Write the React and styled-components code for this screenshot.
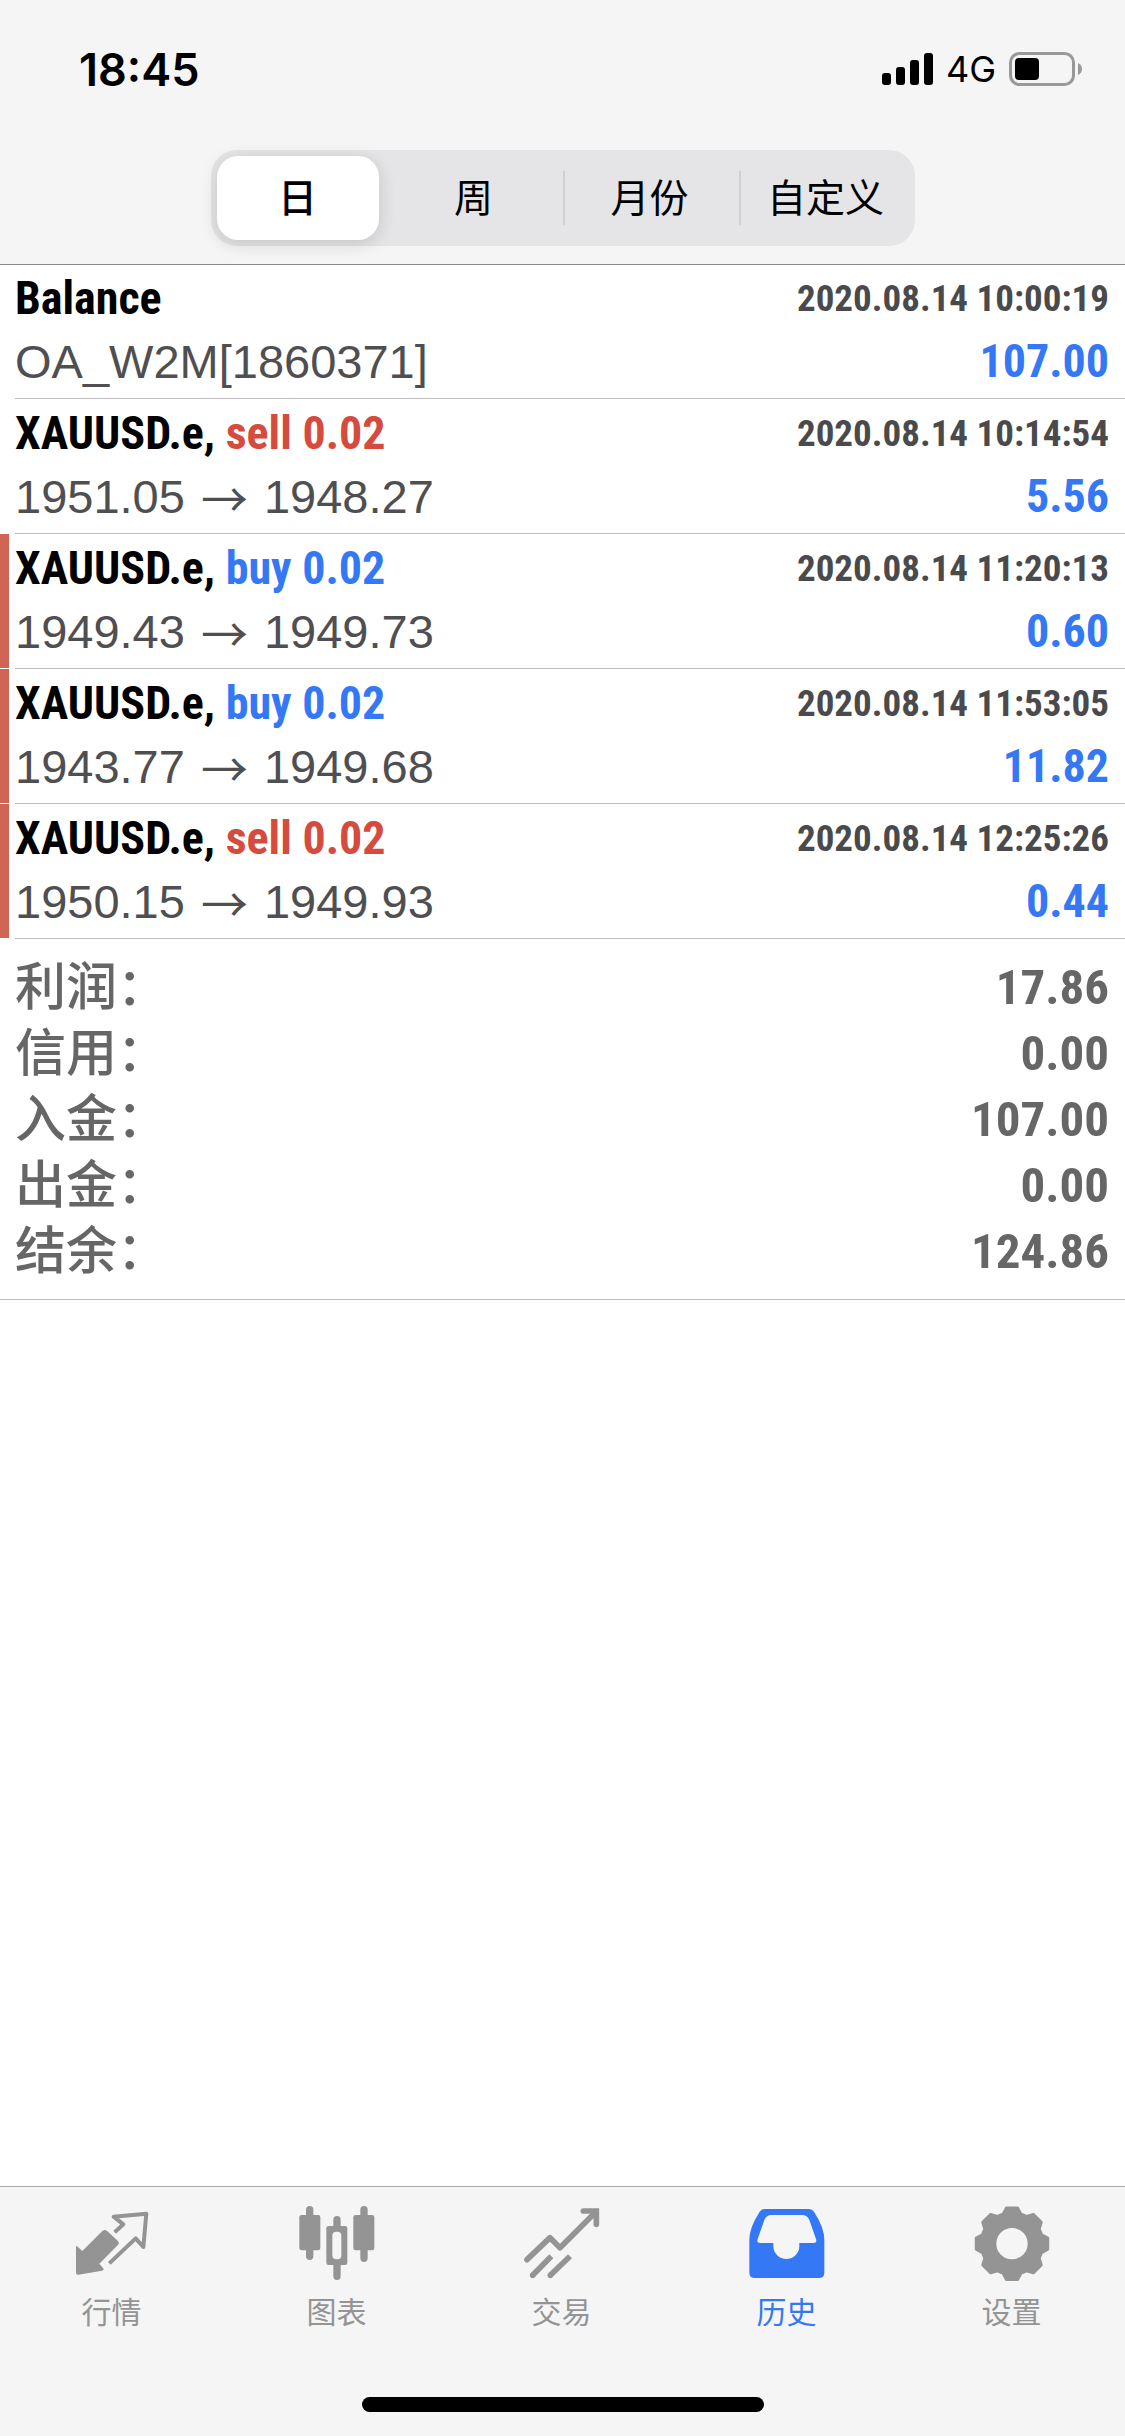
import React, { useState } from "react";
import styled, { createGlobalStyle } from "styled-components";

const GlobalStyle = createGlobalStyle`
    * {
        box-sizing: border-box;
    }

    body {
        margin: 0;
        background-color: #fff;
    }

    button {
        font: inherit;
        color: inherit;
        background: none;
        border: none;
        padding: 0;
    }
`;

const narrow = `"Roboto Condensed", "Liberation Sans", sans-serif`;
const chrome = "#f5f5f5";
const blue = "#3478f6";
const red = "#d54b3d";

const StyledPage = styled.div`
    display: flex;
    flex-direction: column;
    min-height: 100vh;
    font-family: "Liberation Sans", "Noto Sans CJK SC", sans-serif;
`;

const StyledHeader = styled.header`
    display: flex;
    flex-direction: column;
    background-color: ${chrome};
    border-bottom: 1px solid #8a8a8a;
    padding-bottom: 18px;
`;

const StyledStatusBar = styled.div`
    display: flex;
    align-items: center;
    justify-content: space-between;
    height: 138px;
    padding: 0 43px 0 79px;
    margin-bottom: 12px;
    font-family: "Inter", sans-serif;
    color: #000;
`;

const StyledTime = styled.span`
    font-size: 45px;
    font-weight: 600;
`;

const StyledIndicators = styled.div`
    display: flex;
    align-items: center;
    gap: 13px;
    font-size: 36px;
`;

const StyledSegments = styled.div`
    display: grid;
    grid-template-columns: repeat(4, 1fr);
    align-self: center;
    width: 704px;
    max-width: 100%;
    height: 96px;
    border-radius: 26px;
    background-color: #e5e5e7;
    font-size: 39px;
    line-height: 39px;
`;

const StyledSegment = styled.button`
    display: flex;
    align-items: center;
    justify-content: center;
    margin: 6px 8px 6px 6px;
    border-radius: 21px;
    font-weight: ${(props) => (props.$active ? 500 : 400)};
    background-color: ${(props) => (props.$active ? "#fff" : "transparent")};
    box-shadow: ${(props) =>
        props.$active ? "0 4px 18px rgba(0, 0, 0, 0.14)" : "none"};
`;

const StyledSegmentCell = styled.div`
    display: grid;
    background: ${(props) =>
        props.$divided
            ? "linear-gradient(#cfcfd2, #cfcfd2) left center / 2px 54px no-repeat"
            : "none"};
`;

const StyledMain = styled.main`
    flex: 1;
`;

const StyledMarker = styled.span`
    width: 9px;
    margin-bottom: 1px;
    background-color: ${(props) => (props.$on ? "#d26456" : "transparent")};
`;

const StyledDealBody = styled.div`
    flex: 1;
    padding: 3px 16px 5px 0;
    border-bottom: 1px solid #bfbfc1;
`;

const StyledDeal = styled.li`
    display: flex;
    gap: 6px;

    &:first-child ${StyledDealBody} {
        padding-top: 2px;
    }
`;

const StyledDeals = styled.ul`
    list-style: none;
    margin: 0;
    padding: 0;
`;

const StyledLine = styled.div`
    display: flex;
    align-items: center;
    justify-content: space-between;
    line-height: 63px;
`;

const StyledSymbol = styled.strong`
    font-family: ${narrow};
    font-size: 46px;
    color: #000;
`;

const StyledSide = styled.span`
    color: ${(props) => (props.$side === "sell" ? red : blue)};
`;

const StyledDate = styled.time`
    font-family: ${narrow};
    font-size: 37px;
    font-weight: 700;
    color: #4a4a4d;
`;

const StyledDetail = styled.span`
    display: flex;
    align-items: center;
    font-size: 47px;
    color: #4f4f52;
`;

const StyledArrow = styled.span`
    padding: 0 16px;
    font-family: "Noto Sans CJK SC", sans-serif;
    font-weight: 400;
`;

const StyledProfit = styled.span`
    font-family: ${narrow};
    font-size: 46px;
    font-weight: 700;
    color: ${blue};
`;

const StyledSummary = styled.dl`
    margin: 0;
    padding: 16px 16px 14px 15px;
    border-bottom: 1px solid #bfbfc1;
    color: #666;
    line-height: 66px;
`;

const StyledTotal = styled.div`
    display: flex;
    justify-content: space-between;

    dt {
        font-size: 51px;
        font-weight: 500;
    }

    dd {
        margin: 0;
        font-family: ${narrow};
        font-size: 49px;
        font-weight: 700;
    }
`;

const StyledFooter = styled.footer`
    display: flex;
    flex-direction: column;
    align-items: center;
    background-color: ${chrome};
    border-top: 1px solid #a8a8a8;
    padding: 18px 0 24px;
`;

const StyledTabs = styled.nav`
    display: grid;
    grid-template-columns: repeat(5, 1fr);
    width: 100%;
    margin-bottom: 64px;
`;

const StyledTab = styled.a`
    display: flex;
    flex-direction: column;
    align-items: center;
    gap: 12px;
    padding-right: 2px;
    font-size: 30px;
    line-height: 40px;
    text-decoration: none;
    color: ${(props) => (props.$active ? blue : "#949494")};

    svg {
        width: 76px;
        height: 76px;
    }
`;

const StyledHomeIndicator = styled.div`
    width: 402px;
    height: 15px;
    border-radius: 8px;
    background-color: #000;
`;

function SignalIcon() {
    return (
        <svg width="51" height="32" viewBox="0 0 51 32">
            <rect x="0" y="20" width="9" height="12" rx="3" />
            <rect x="14" y="14" width="9" height="18" rx="3" />
            <rect x="28" y="7" width="9" height="25" rx="3" />
            <rect x="42" y="0" width="9" height="32" rx="3" />
        </svg>
    );
}

function BatteryIcon() {
    return (
        <svg width="73" height="34" viewBox="0 0 73 34">
            <rect x="1.5" y="1.5" width="63" height="31" rx="9" fill="none" stroke="#999" strokeWidth="3" />
            <rect x="6" y="6" width="24" height="22" rx="4" />
            <path d="M69 11 Q73 13 73 17 T69 23Z" fill="#999" />
        </svg>
    );
}

function QuotesIcon() {
    return (
        <svg viewBox="0 0 228 228" fill="currentColor">
            <path d="M6 126 Q6 120 11 125 L25 138 L85 78 Q93 71 102 80 L131 107 Q138 114 131 121 L76 176 L87 189 Q92 195 84 197 L13 209 Q6 210 6 203Z" />
            <path
                d="M122 82 L148 58 L119 35 L217 26 L208 126 L185 100 L106 175"
                fill="none"
                stroke="currentColor"
                strokeWidth="12"
                strokeLinejoin="round"
            />
        </svg>
    );
}

function ChartIcon() {
    return (
        <svg viewBox="0 0 228 228" fill="currentColor">
            <rect x="1" y="30" width="63" height="106" rx="7" />
            <rect x="21" y="3" width="22" height="162" rx="11" />
            <rect x="82" y="63" width="63" height="117" rx="7" />
            <rect x="103" y="33" width="22" height="192" rx="11" />
            <rect x="100" y="80" width="27" height="83" rx="12" fill={chrome} />
            <rect x="163" y="30" width="63" height="106" rx="7" />
            <rect x="184" y="3" width="22" height="168" rx="11" />
        </svg>
    );
}

function TradeIcon() {
    return (
        <svg viewBox="0 0 228 228" fill="none" stroke="currentColor" strokeWidth="17">
            <path d="M9 164 L78 98 L108 128 L216 20" strokeLinecap="round" strokeLinejoin="round" />
            <path d="M178 18 H217 V58" strokeLinecap="round" />
            <path d="M26 211 L82 154 M79 211 L138 154" />
            <g fill="currentColor" stroke="none">
                <circle cx="26" cy="211" r="8.5" />
                <circle cx="79" cy="211" r="8.5" />
            </g>
        </svg>
    );
}

function HistoryIcon() {
    return (
        <svg viewBox="0 0 228 228" fill="currentColor" fillRule="evenodd">
            <path d="M46 12 H180 Q190 12 195 20 Q226 68 226 104 V203 Q226 219 210 219 H17 Q1 219 1 203 V104 Q1 68 32 20 Q37 12 46 12Z M68 30 Q52 30 46 45 L26 102 Q22 114 34 114 H73 V123 A39 39 0 0 0 151 123 V114 H193 Q205 114 201 102 L181 45 Q175 30 159 30Z" />
        </svg>
    );
}

// eight teeth, each one a trapezoid between the root and tip radius
const gearPoints = Array.from({ length: 8 })
    .flatMap((_, i) =>
        [
            [-17, 93],
            [-9, 109],
            [9, 109],
            [17, 93],
        ].map(([offset, radius]) => {
            const angle = ((i * 45 + offset) * Math.PI) / 180;
            const x = 114 + radius * Math.sin(angle);
            const y = 116 - radius * Math.cos(angle);
            return `${x.toFixed(1)} ${y.toFixed(1)}`;
        })
    )
    .join(" L");

function SettingsIcon() {
    return (
        <svg viewBox="0 0 228 228" fill="currentColor" fillRule="evenodd">
            <path
                d={`M${gearPoints}Z M63 116 a51 51 0 1 0 102 0 a51 51 0 1 0 -102 0Z`}
                stroke="currentColor"
                strokeWidth="8"
                strokeLinejoin="round"
            />
        </svg>
    );
}

const periods = ["日", "周", "月份", "自定义"];

const deals = [
    { symbol: "XAUUSD.e", side: "sell", volume: "0.02", open: "1951.05", close: "1948.27", date: "2020.08.14 10:14:54", profit: "5.56" },
    { symbol: "XAUUSD.e", side: "buy", volume: "0.02", open: "1949.43", close: "1949.73", date: "2020.08.14 11:20:13", profit: "0.60", marked: true },
    { symbol: "XAUUSD.e", side: "buy", volume: "0.02", open: "1943.77", close: "1949.68", date: "2020.08.14 11:53:05", profit: "11.82", marked: true },
    { symbol: "XAUUSD.e", side: "sell", volume: "0.02", open: "1950.15", close: "1949.93", date: "2020.08.14 12:25:26", profit: "0.44", marked: true },
];

const totals = [
    ["利润", "17.86"],
    ["信用", "0.00"],
    ["入金", "107.00"],
    ["出金", "0.00"],
    ["结余", "124.86"],
];

const tabs = [
    { id: "quotes", label: "行情", Icon: QuotesIcon },
    { id: "chart", label: "图表", Icon: ChartIcon },
    { id: "trade", label: "交易", Icon: TradeIcon },
    { id: "history", label: "历史", Icon: HistoryIcon },
    { id: "settings", label: "设置", Icon: SettingsIcon },
];

function Deal({ title, detail, date, profit, marked }) {
    return (
        <StyledDeal>
            <StyledMarker $on={marked} />
            <StyledDealBody>
                <StyledLine>
                    <StyledSymbol>{title}</StyledSymbol>
                    <StyledDate>{date}</StyledDate>
                </StyledLine>
                <StyledLine>
                    <StyledDetail>{detail}</StyledDetail>
                    <StyledProfit>{profit}</StyledProfit>
                </StyledLine>
            </StyledDealBody>
        </StyledDeal>
    );
}

export default function App() {
    const [period, setPeriod] = useState(0);
    const [tab, setTab] = useState("history");

    return (
        <StyledPage>
            <GlobalStyle />
            <StyledHeader>
                <StyledStatusBar>
                    <StyledTime>18:45</StyledTime>
                    <StyledIndicators>
                        <SignalIcon />
                        <span>4G</span>
                        <BatteryIcon />
                    </StyledIndicators>
                </StyledStatusBar>
                <StyledSegments>
                    {periods.map((name, i) => (
                        <StyledSegmentCell
                            key={name}
                            $divided={i > 0 && i !== period && i - 1 !== period}
                        >
                            <StyledSegment
                                type="button"
                                aria-pressed={i === period}
                                $active={i === period}
                                onClick={() => setPeriod(i)}
                            >
                                {name}
                            </StyledSegment>
                        </StyledSegmentCell>
                    ))}
                </StyledSegments>
            </StyledHeader>
            <StyledMain>
                <StyledDeals>
                    <Deal
                        title="Balance"
                        detail="OA_W2M[1860371]"
                        date="2020.08.14 10:00:19"
                        profit="107.00"
                    />
                    {deals.map((deal) => (
                        <Deal
                            key={deal.date}
                            title={
                                <>
                                    {deal.symbol},{" "}
                                    <StyledSide $side={deal.side}>
                                        {deal.side} {deal.volume}
                                    </StyledSide>
                                </>
                            }
                            detail={
                                <>
                                    {deal.open}
                                    <StyledArrow>→</StyledArrow>
                                    {deal.close}
                                </>
                            }
                            date={deal.date}
                            profit={deal.profit}
                            marked={deal.marked}
                        />
                    ))}
                </StyledDeals>
                <StyledSummary>
                    {totals.map(([label, value]) => (
                        <StyledTotal key={label}>
                            <dt>{label}：</dt>
                            <dd>{value}</dd>
                        </StyledTotal>
                    ))}
                </StyledSummary>
            </StyledMain>
            <StyledFooter>
                <StyledTabs>
                    {tabs.map(({ id, label, Icon }) => (
                        <StyledTab
                            key={id}
                            href={`#${id}`}
                            $active={tab === id}
                            onClick={() => setTab(id)}
                        >
                            <Icon />
                            {label}
                        </StyledTab>
                    ))}
                </StyledTabs>
                <StyledHomeIndicator />
            </StyledFooter>
        </StyledPage>
    );
}
